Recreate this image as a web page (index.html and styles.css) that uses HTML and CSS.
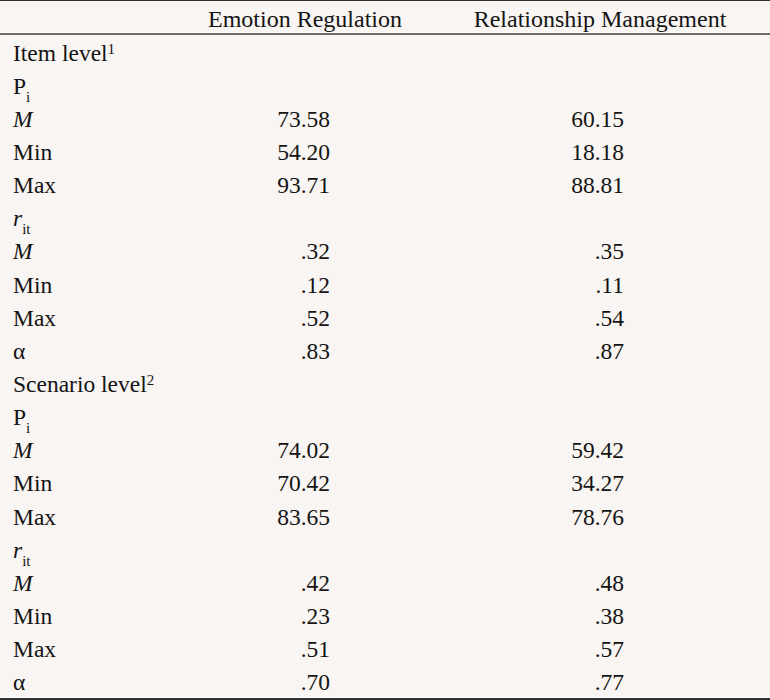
FILE: index.html
```html
<!DOCTYPE html>
<html lang="en">
<head>
<meta charset="utf-8">
<title>Table</title>
<link rel="stylesheet" href="styles.css">
</head>
<body>
<table class="stats">
  <colgroup>
    <col class="c-label">
    <col class="c-one">
    <col class="c-two">
  </colgroup>
  <thead>
    <tr>
      <th></th>
      <th class="h-one">Emotion Regulation</th>
      <th class="h-two">Relationship Management</th>
    </tr>
  </thead>
  <tbody>
    <tr><td>Item level<sup>1</sup></td><td></td><td></td></tr>
    <tr><td>P<sub>i</sub></td><td></td><td></td></tr>
    <tr><td><i>M</i></td><td class="n1">73.58</td><td class="n2">60.15</td></tr>
    <tr><td>Min</td><td class="n1">54.20</td><td class="n2">18.18</td></tr>
    <tr><td>Max</td><td class="n1">93.71</td><td class="n2">88.81</td></tr>
    <tr><td><i>r</i><sub>it</sub></td><td></td><td></td></tr>
    <tr><td><i>M</i></td><td class="n1">.32</td><td class="n2">.35</td></tr>
    <tr><td>Min</td><td class="n1">.12</td><td class="n2">.11</td></tr>
    <tr><td>Max</td><td class="n1">.52</td><td class="n2">.54</td></tr>
    <tr><td>α</td><td class="n1">.83</td><td class="n2">.87</td></tr>
    <tr><td>Scenario level<sup>2</sup></td><td></td><td></td></tr>
    <tr><td>P<sub>i</sub></td><td></td><td></td></tr>
    <tr><td><i>M</i></td><td class="n1">74.02</td><td class="n2">59.42</td></tr>
    <tr><td>Min</td><td class="n1">70.42</td><td class="n2">34.27</td></tr>
    <tr><td>Max</td><td class="n1">83.65</td><td class="n2">78.76</td></tr>
    <tr><td><i>r</i><sub>it</sub></td><td></td><td></td></tr>
    <tr><td><i>M</i></td><td class="n1">.42</td><td class="n2">.48</td></tr>
    <tr><td>Min</td><td class="n1">.23</td><td class="n2">.38</td></tr>
    <tr><td>Max</td><td class="n1">.51</td><td class="n2">.57</td></tr>
    <tr class="last"><td>α</td><td class="n1">.70</td><td class="n2">.77</td></tr>
  </tbody>
</table>
</body>
</html>
```
FILE: styles.css
```css
html, body {
  margin: 0;
  padding: 0;
  background: #f9f5f2;
}
.stats {
  width: 770px;
  border-collapse: separate;
  border-spacing: 0;
  table-layout: fixed;
  font-family: "Liberation Serif", "Times New Roman", serif;
  font-size: 23.5px;
  color: #141414;
  border-top: 1px solid #2e2e2e;
}
.c-label { width: 200px; }
.c-one { width: 210px; }
.c-two { width: 360px; }
th, td {
  padding: 2px 0 0 0;
  line-height: 24px;
  font-weight: normal;
  vertical-align: middle;
}
thead tr { height: 34px; }
tbody tr { height: 33.15px; }
tbody tr.last { height: 35.15px; }
th {
  font-size: 24px;
  padding-top: 3px;
  border-bottom: 2px solid #6b6b6b;
  box-shadow: inset 0 -1px 0 #ffffff;
}
.last td {
  border-bottom: 2px solid #333333;
  box-shadow: inset 0 -1px 0 #ffffff;
}
td:first-child { padding-left: 13px; }
.h-one { text-align: center; }
.h-two { text-align: center; padding-left: 20px; }
.n1 { text-align: right; padding-right: 80px; }
.n2 { text-align: right; padding-right: 146px; }
sup { font-size: 15px; vertical-align: 7px; line-height: 0; }
sub { font-size: 15px; vertical-align: -8px; line-height: 0; }
```
